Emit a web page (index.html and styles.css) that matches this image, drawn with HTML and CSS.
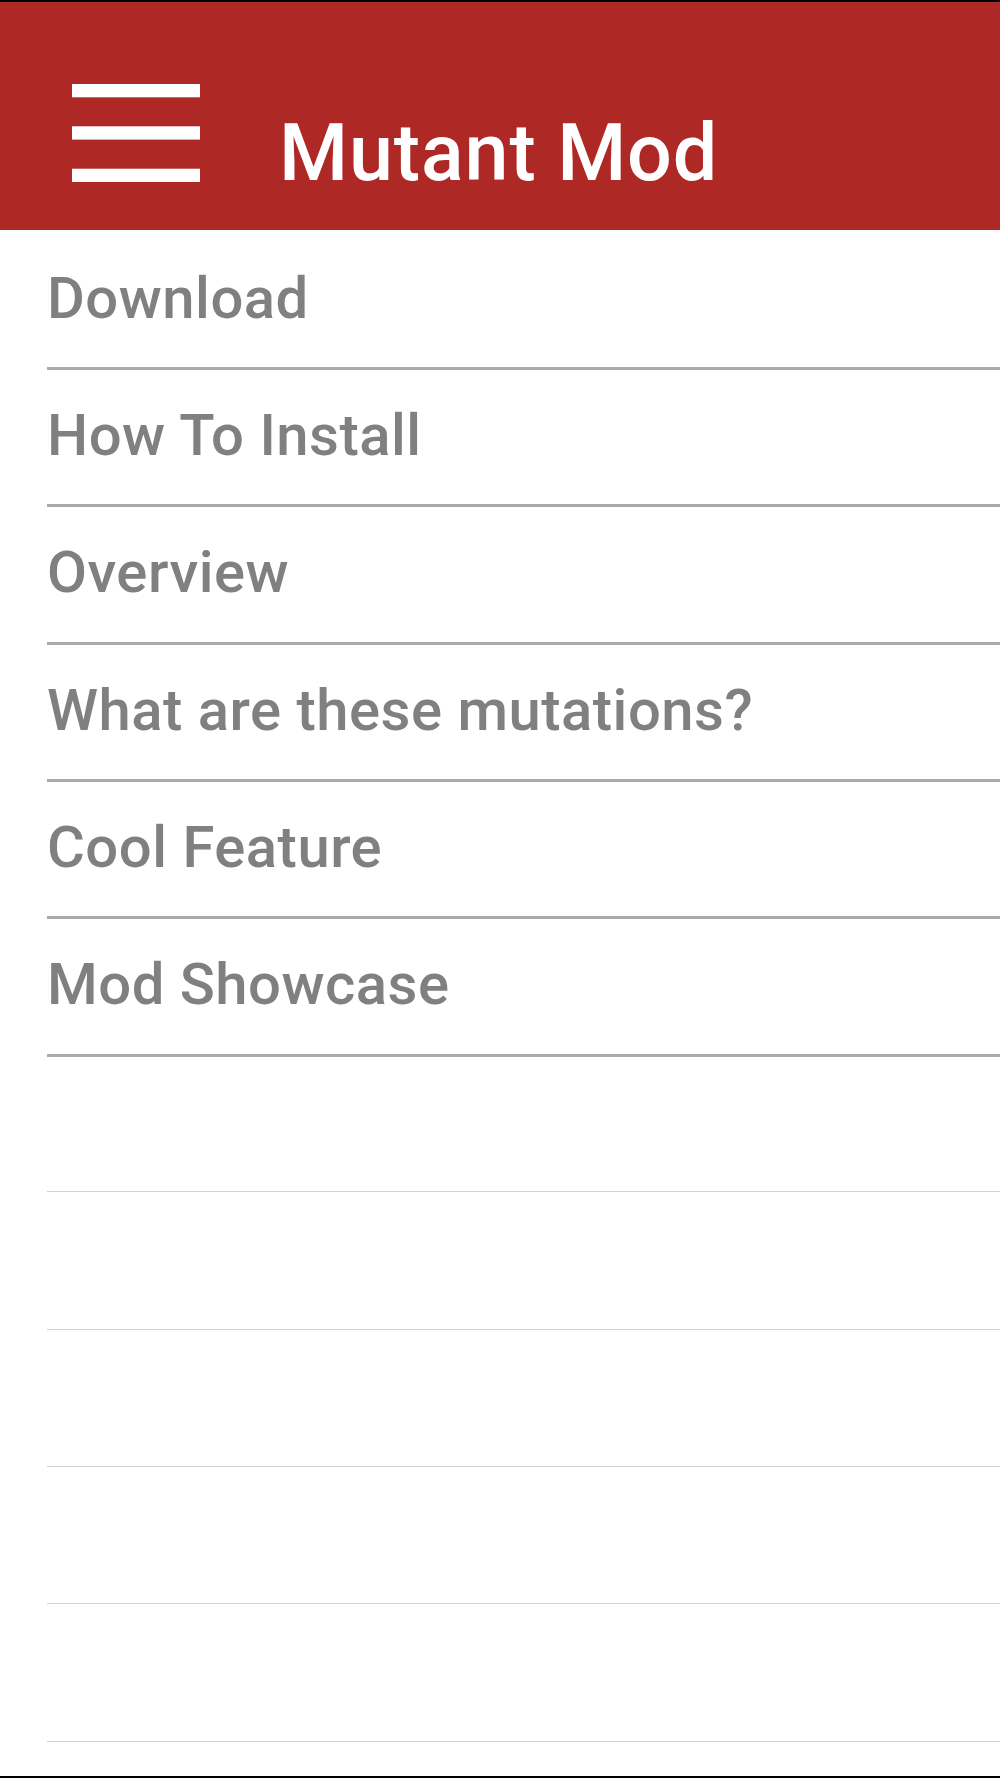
FILE: index.html
```html
<!DOCTYPE html>
<html lang="en">
<head>
<meta charset="utf-8">
<title>Mutant Mod</title>
<link rel="stylesheet" href="styles.css">
</head>
<body>
<div class="screen">
  <header class="topbar">
    <svg class="menu-icon" width="128" height="98" viewBox="0 0 128 98" aria-hidden="true">
      <rect x="0" y="0" width="128" height="13.3" fill="#fff"/>
      <rect x="0" y="42.3" width="128" height="13.3" fill="#fff"/>
      <rect x="0" y="84.7" width="128" height="13.3" fill="#fff"/>
    </svg>
    <h1 class="title">Mutant Mod</h1>
  </header>
  <ul class="menu">
    <li class="row">Download</li>
    <li class="row">How To Install</li>
    <li class="row">Overview</li>
    <li class="row">What are these mutations?</li>
    <li class="row">Cool Feature</li>
    <li class="row">Mod Showcase</li>
    <li class="row empty"></li>
    <li class="row empty"></li>
    <li class="row empty"></li>
    <li class="row empty"></li>
    <li class="row empty"></li>
  </ul>
</div>
</body>
</html>
```
FILE: styles.css
```css
html, body {
  margin: 0;
  padding: 0;
  background: #fff;
}

.screen {
  height: 1778px;
  box-sizing: border-box;
  border-top: 2px solid #000;
  border-bottom: 2px solid #000;
  display: flex;
  flex-direction: column;
  overflow: hidden;
  font-family: Roboto, "Liberation Sans", Arial, sans-serif;
}

.topbar {
  height: 227.5px;
  flex: none;
  background: #ae2826;
  display: flex;
  align-items: flex-start;
  padding-left: 72px;
  box-sizing: border-box;
}

.menu-icon {
  display: block;
  margin-top: 82.3px;
  flex: none;
}

.title {
  margin: 111.5px 0 0 79px;
  font-size: 79px;
  line-height: 79px;
  font-weight: 500;
  letter-spacing: 0.9px;
  color: #fff;
}

.menu {
  list-style: none;
  margin: 0;
  padding: 3px 0 0 47px;
}

.row {
  height: 134.4px;
  box-sizing: content-box;
  border-bottom: 3px solid #aaaaaa;
  padding: 0;
  font-size: 58px;
  line-height: 58px;
  font-weight: 500;
  letter-spacing: 0.5px;
  color: #808080;
  white-space: nowrap;
}

.row::before {
  content: "";
  display: block;
  height: 36px;
}

.row.empty {
  border-bottom: 1px solid #d2d2d2;
  margin-bottom: 2px;
}
```
